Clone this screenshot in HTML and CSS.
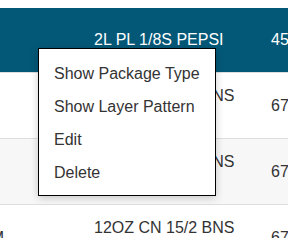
FILE: index.html
```html
<!DOCTYPE html>
<html lang="en">
<head>
    <meta charset="UTF-8">
    <meta name="viewport" content="width=device-width, initial-scale=1.0">
    <title>Items</title>
    <link rel="stylesheet" href="styles.css">
</head>
<body>
    <div class="table">
        <div class="row header-row">
            <div class="cell item-cell"></div>
            <div class="cell desc">2L PL 1/8S PEPSI</div>
            <div class="cell qty">45</div>
        </div>
        <div class="row">
            <div class="cell item-cell"></div>
            <div class="cell desc">12OZ CN 15/2 BNS<br>PEPSI</div>
            <div class="cell qty">67</div>
        </div>
        <div class="row striped">
            <div class="cell item-cell"></div>
            <div class="cell desc">12OZ CN 15/2 BNS<br>DT PEPSI</div>
            <div class="cell qty">67</div>
        </div>
        <div class="row">
            <div class="cell item-cell"><span>ITEM</span></div>
            <div class="cell desc">12OZ CN 15/2 BNS<br>MTN DEW</div>
            <div class="cell qty">67</div>
        </div>
    </div>

    <ul class="context-menu">
        <li>Show Package Type</li>
        <li>Show Layer Pattern</li>
        <li>Edit</li>
        <li>Delete</li>
    </ul>
</body>
</html>
```

FILE: styles.css
```css
body {
    margin: 0;
    padding-top: 8px;
    font-family: "Liberation Sans", Arial, sans-serif;
    font-size: 16px;
    color: #333;
    background-color: #fff;
    overflow: hidden;
}

.table {
    width: 100%;
}

.row {
    display: grid;
    grid-template-columns: 94px 177px 1fr;
    align-items: center;
    height: 65px;
    border-bottom: 1px solid #dedede;
    line-height: 20px;
}

.header-row {
    height: 64px;
    background-color: #045877;
    color: #fff;
}

.striped {
    background-color: #f7f7f7;
}

.cell {
    white-space: nowrap;
}

.item-cell {
    display: flex;
    justify-content: flex-end;
    padding-right: 90px;
    overflow: hidden;
}

.qty {
    overflow: hidden;
}

.context-menu {
    position: absolute;
    left: 38px;
    top: 48px;
    width: 178px;
    box-sizing: border-box;
    margin: 0;
    padding: 8px 0 6px;
    list-style: none;
    background-color: #fff;
    border: 1px solid #000;
    box-shadow: 0 2px 8px rgba(0,0,0,0.2);
}

.context-menu li {
    padding: 7px 15px;
    line-height: 19px;
    color: #333;
    cursor: pointer;
}
```
